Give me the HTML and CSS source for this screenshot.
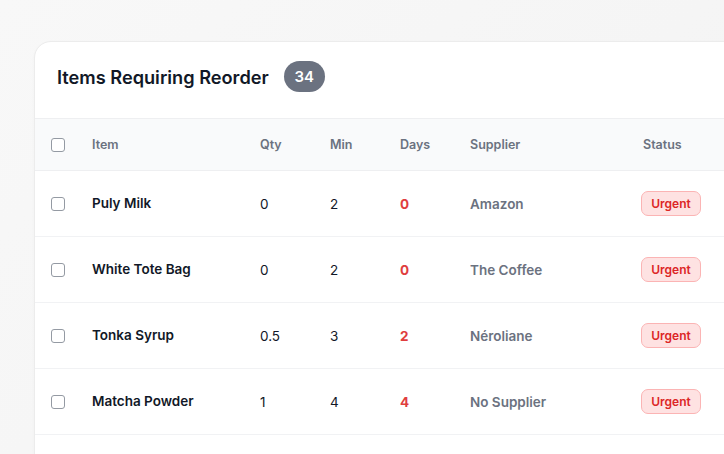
FILE: index.html
```html
<!DOCTYPE html>
<html>
<head>
<meta charset="utf-8">
<link rel="stylesheet" href="styles.css">
</head>
<body>
<div class="card">
  <div class="card-head">
    <h2 class="title">Items Requiring Reorder</h2>
    <span class="count">34</span>
  </div>
  <table class="grid">
    <colgroup>
      <col class="c-check"><col class="c-item"><col class="c-num"><col class="c-num"><col class="c-num"><col class="c-sup"><col class="c-status">
    </colgroup>
    <thead>
      <tr>
        <th><span class="box"></span></th>
        <th>Item</th><th>Qty</th><th>Min</th><th>Days</th><th>Supplier</th><th class="st">Status</th>
      </tr>
    </thead>
    <tbody>
      <tr>
        <td><span class="box"></span></td>
        <td class="item">Puly Milk</td><td>0</td><td>2</td><td class="days">0</td><td class="sup">Amazon</td>
        <td><span class="urgent">Urgent</span></td>
      </tr>
      <tr>
        <td><span class="box"></span></td>
        <td class="item">White Tote Bag</td><td>0</td><td>2</td><td class="days">0</td><td class="sup">The Coffee</td>
        <td><span class="urgent">Urgent</span></td>
      </tr>
      <tr>
        <td><span class="box"></span></td>
        <td class="item">Tonka Syrup</td><td>0.5</td><td>3</td><td class="days">2</td><td class="sup">Néroliane</td>
        <td><span class="urgent">Urgent</span></td>
      </tr>
      <tr>
        <td><span class="box"></span></td>
        <td class="item">Matcha Powder</td><td>1</td><td>4</td><td class="days">4</td><td class="sup">No Supplier</td>
        <td><span class="urgent">Urgent</span></td>
      </tr>
      <tr class="last">
        <td></td><td></td><td></td><td></td><td></td><td></td><td></td>
      </tr>
    </tbody>
  </table>
</div>
</body>
</html>
```
FILE: styles.css
```css
html, body {
  margin: 0;
  height: 100%;
  overflow: hidden;
}
body {
  background: linear-gradient(135deg, #f8f8f8 0%, #f3f3f3 100%);
  font-family: Inter, "Noto Sans", sans-serif;
  padding: 41px 0 0 34px;
  box-sizing: border-box;
}
.card {
  width: 780px;
  height: 520px;
  background: #fff;
  border: 1px solid #ececec;
  border-radius: 17px;
  box-shadow: 0 1px 3px rgba(0,0,0,0.03);
  overflow: hidden;
}
.card-head {
  display: flex;
  align-items: center;
  gap: 15px;
  padding: 19px 0 26px 22px;
}
.title {
  margin: 0;
  font-size: 18.2px;
  font-weight: 600;
  color: #111827;
}
.count {
  display: inline-flex;
  align-items: center;
  justify-content: center;
  width: 41px;
  height: 31px;
  border-radius: 16px;
  background: #6b7280;
  color: #fff;
  font-size: 15px;
  font-weight: 600;
}
.grid {
  border-collapse: collapse;
  table-layout: fixed;
  width: 780px;
}
.c-check { width: 57px; }
.c-item { width: 168px; }
.c-num { width: 70px; }
.c-sup { width: 171px; }
.c-status { width: 174px; }
th, td {
  padding: 0;
  text-align: left;
  vertical-align: middle;
}
thead tr {
  background: #f9fafb;
  border-top: 1px solid #eeeff1;
  border-bottom: 1px solid #eeeff1;
  height: 52px;
}
th {
  font-size: 12.5px;
  font-weight: 600;
  color: #6b7280;
}
th.st {
  padding-left: 2px;
}
th:first-child, td:first-child {
  padding-left: 16px;
}
tbody tr {
  height: 66px;
  border-bottom: 1px solid #f1f2f4;
}
td {
  font-size: 13.5px;
  color: #111827;
}
.box {
  display: block;
  width: 12px;
  height: 12px;
  border: 1px solid #949aa3;
  border-radius: 3px;
  background: #fff;
}
.item {
  font-weight: 600;
  padding-bottom: 2px;
}
.days {
  color: #e03e3e;
  font-weight: 700;
}
.sup {
  color: #6b7280;
  font-weight: 600;
}
.urgent {
  display: inline-flex;
  align-items: center;
  justify-content: center;
  width: 58px;
  height: 23px;
  border: 1px solid #fbb4b4;
  border-radius: 7px;
  background: #fee2e2;
  color: #dc2626;
  font-size: 12px;
  font-weight: 600;
}
```
